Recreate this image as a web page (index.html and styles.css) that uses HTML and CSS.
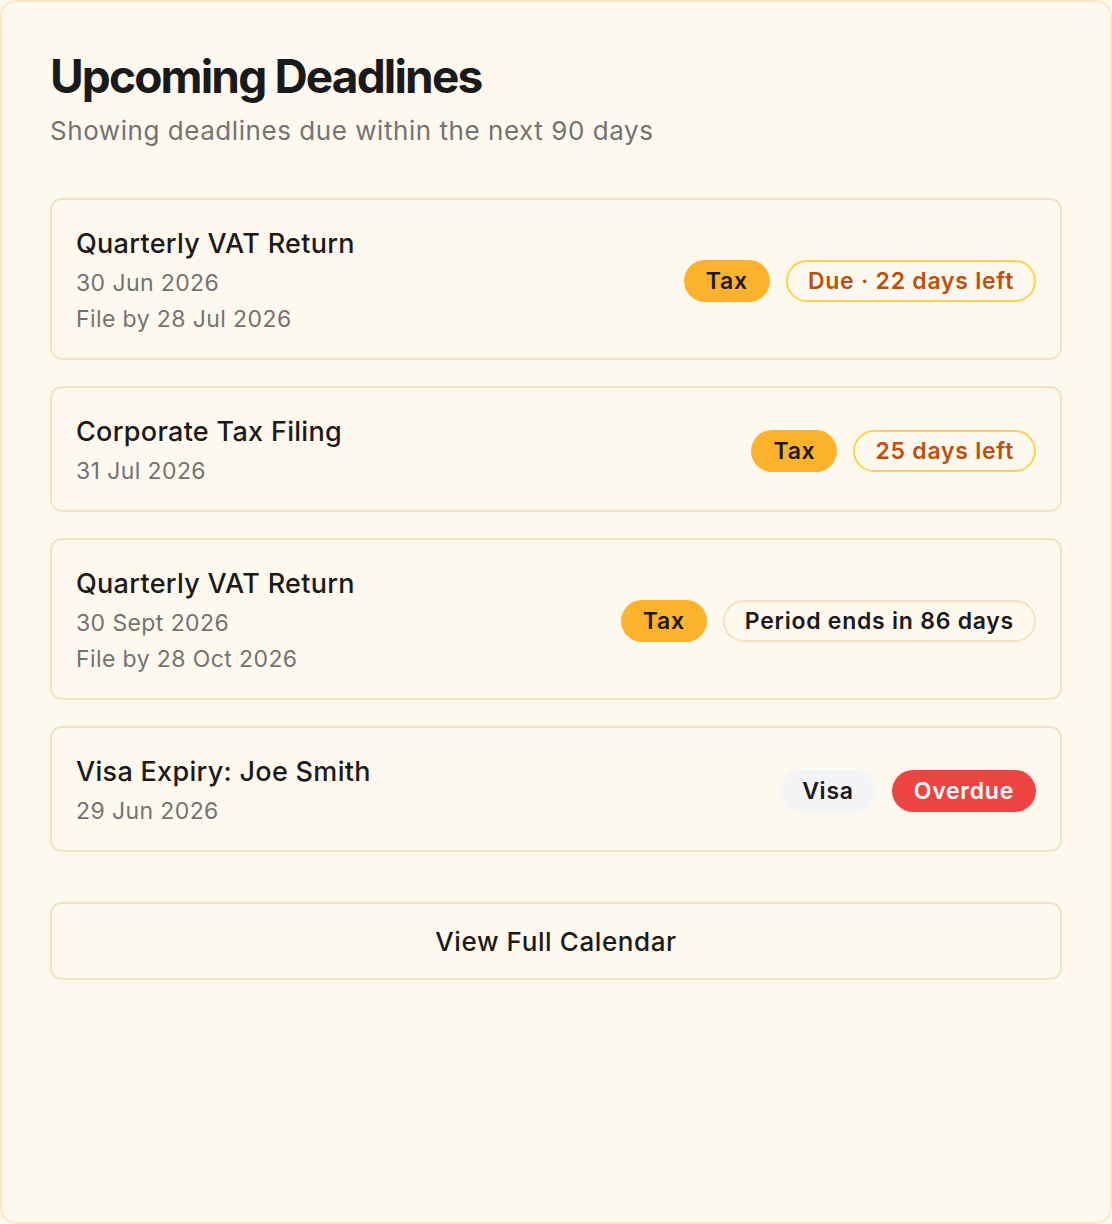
FILE: index.html
```html
<!DOCTYPE html>
<html lang="en">
<head>
  <meta charset="UTF-8">
  <meta name="viewport" content="width=device-width, initial-scale=1.0">
  <title>Upcoming Deadlines</title>
  <link rel="stylesheet" href="styles.css">
</head>
<body>
  <div class="panel">
    <h1>Upcoming Deadlines</h1>
    <p class="subtitle">Showing deadlines due within the next 90 days</p>

    <div class="list">
      <div class="item">
        <div class="info">
          <div class="name">Quarterly VAT Return</div>
          <div class="meta">30 Jun 2026</div>
          <div class="meta">File by 28 Jul 2026</div>
        </div>
        <div class="tags">
          <span class="pill tax">Tax</span>
          <span class="pill due">Due · 22 days left</span>
        </div>
      </div>

      <div class="item">
        <div class="info">
          <div class="name">Corporate Tax Filing</div>
          <div class="meta">31 Jul 2026</div>
        </div>
        <div class="tags">
          <span class="pill tax">Tax</span>
          <span class="pill due">25 days left</span>
        </div>
      </div>

      <div class="item">
        <div class="info">
          <div class="name">Quarterly VAT Return</div>
          <div class="meta">30 Sept 2026</div>
          <div class="meta">File by 28 Oct 2026</div>
        </div>
        <div class="tags">
          <span class="pill tax">Tax</span>
          <span class="pill period">Period ends in 86 days</span>
        </div>
      </div>

      <div class="item">
        <div class="info">
          <div class="name">Visa Expiry: Joe Smith</div>
          <div class="meta">29 Jun 2026</div>
        </div>
        <div class="tags">
          <span class="pill visa">Visa</span>
          <span class="pill overdue">Overdue</span>
        </div>
      </div>
    </div>

    <button class="calendar">View Full Calendar</button>
  </div>
</body>
</html>
```

FILE: styles.css
```css
* {
  box-sizing: border-box;
}
body {
  margin: 0;
  font-family: Inter, 'Noto Sans', sans-serif;
  background: #fef9ef;
  color: #1c1917;
}
.panel {
  height: 100vh;
  background: #fef9ef;
  border: 2px solid #fde7c6;
  border-radius: 16px;
  padding: 46px 48px 48px;
}
h1 {
  margin: 0;
  font-size: 46px;
  line-height: 56px;
  font-weight: 700;
  letter-spacing: -0.04em;
  color: #1a1a1a;
}
.subtitle {
  margin: 10px 0 0;
  font-size: 26px;
  line-height: 34px;
  letter-spacing: 0.55px;
  color: #737373;
}
.list {
  margin-top: 50px;
  display: flex;
  flex-direction: column;
  gap: 26px;
}
.item {
  display: flex;
  align-items: center;
  justify-content: space-between;
  border: 2px solid #f4e3c2;
  border-radius: 12px;
  padding: 25px 24px 21px;
}
.name {
  font-size: 27px;
  line-height: 38px;
  font-weight: 500;
  letter-spacing: 0.3px;
  margin-bottom: 2px;
}
.meta {
  font-size: 23px;
  line-height: 36px;
  letter-spacing: 0.4px;
  color: #737373;
}
.tags {
  display: flex;
  gap: 16px;
}
.pill {
  border: 2px solid transparent;
  border-radius: 999px;
  padding: 6px 20px;
  font-size: 23px;
  line-height: 26px;
  font-weight: 600;
  letter-spacing: 0.75px;
}
.tax {
  background: #fdb22c;
  color: #1c1917;
}
.due {
  border-color: #fcd34d;
  color: #c04e0b;
}
.period {
  border-color: #f4e3c2;
  color: #1c1917;
}
.visa {
  background: #f3f4f6;
  color: #1c1917;
}
.overdue {
  background: #ef4444;
  color: #fff;
}
button.calendar {
  display: block;
  width: 100%;
  margin-top: 50px;
  height: 78px;
  background: transparent;
  border: 2px solid #f4e3c2;
  border-radius: 12px;
  font-family: inherit;
  font-size: 26px;
  font-weight: 500;
  letter-spacing: 0.6px;
  color: #1c1917;
  cursor: pointer;
}
```
